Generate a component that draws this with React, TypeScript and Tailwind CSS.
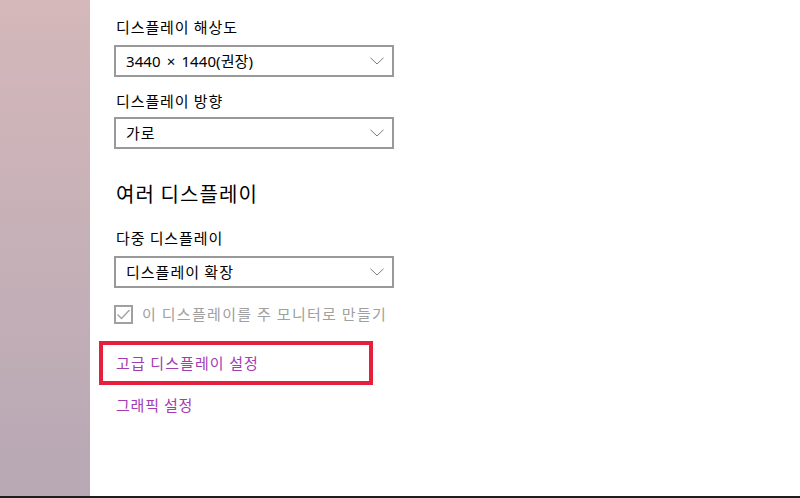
import React from 'react';

const font = { fontFamily: '"Noto Sans CJK KR", "Noto Sans", sans-serif' };
const latinFirst = { fontFamily: '"Noto Sans", "Noto Sans CJK KR", sans-serif' };

const Chevron = () => (
  <svg width="14" height="8" viewBox="0 0 14 8" className="shrink-0">
    <path d="M0.5 0.8 L7 7 L13.5 0.8" fill="none" stroke="#7a7a7a" strokeWidth="1" />
  </svg>
);

interface DropdownProps {
  value: string;
  className?: string;
  latin?: boolean;
}

const Dropdown: React.FC<DropdownProps> = ({ value, className, latin }) => (
  <div
    className={`flex items-center justify-between w-[280px] h-8 border-2 border-[#999999] bg-white pl-[10px] pr-[8px] ${className ?? ''}`}
  >
    <span
      className={`text-[15px] leading-5 text-black ${latin ? 'tracking-[0.1px] [word-spacing:2px]' : 'tracking-[1px]'}`}
      style={latin ? latinFirst : undefined}
    >
      {value}
    </span>
    <Chevron />
  </div>
);

export default function App() {
  return (
    <div className="flex w-[800px] h-[498px] border-b-2 border-[#1e1e1e] bg-white overflow-hidden" style={font}>
      <div className="w-[90px] shrink-0 bg-linear-to-b from-[#d4b8ba] to-[#b7a8b4]" />
      <div className="flex-1 pl-6 pt-[17px]">
        <div className="pl-[2px] text-[15px] leading-5 tracking-[0.9px] text-black">디스플레이 해상도</div>
        <Dropdown value="3440 × 1440(권장)" className="mt-2" latin />

        <div className="mt-[14px] pl-[2px] text-[15px] leading-5 tracking-[0.9px] text-black">디스플레이 방향</div>
        <Dropdown value="가로" className="mt-[6px]" />

        <div className="mt-[31px] pl-[2px] text-[20px] leading-7 tracking-[1.1px] text-black">여러 디스플레이</div>

        <div className="mt-5 pl-[2px] text-[15px] leading-5 tracking-[0.9px] text-black">다중 디스플레이</div>
        <Dropdown value="디스플레이 확장" className="mt-2" />

        <div className="mt-4 flex items-center gap-[9px] h-5">
          <div className="w-[19px] h-[19px] border-2 border-[#a0a0a0] flex items-center justify-center">
            <svg width="15" height="15" viewBox="0 0 15 15">
              <path d="M1.5 7.5 L5.5 11.5 L13.5 3" fill="none" stroke="#a0a0a0" strokeWidth="1.3" />
            </svg>
          </div>
          <span className="text-[15px] leading-5 tracking-[1.3px] text-[#a0a0a0]">이 디스플레이를 주 모니터로 만들기</span>
        </div>

        <div className="mt-[17px] -ml-[15px] w-[274px] h-[44px] border-4 border-[#e61f3d] flex items-center pl-[13px]">
          <span className="text-[15px] leading-5 tracking-[1.1px] text-[#a23cb2]">고급 디스플레이 설정</span>
        </div>

        <div className="mt-[10px] pl-[2px] text-[15px] leading-5 tracking-[0.8px] text-[#a23cb2]">그래픽 설정</div>
      </div>
    </div>
  );
}
